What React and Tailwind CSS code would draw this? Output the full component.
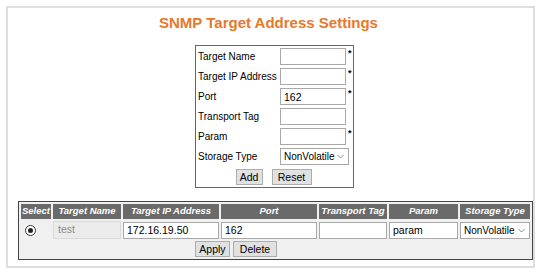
import React from 'react';

const font = "font-['Liberation_Sans',Arial,sans-serif]";

function Chevron() {
  return (
    <svg width="7" height="5" viewBox="0 0 7 5" className="shrink-0">
      <path d="M0.5 1 L3.5 4 L6.5 1" fill="none" stroke="#8a8a8a" strokeWidth="1" />
    </svg>
  );
}

function FakeSelect({ className = '' }) {
  return (
    <div className={`h-[17px] border border-[#a9a9a9] bg-white flex items-center justify-between pl-[3px] pr-[4px] text-[10px] text-black ${className}`}>
      <span>NonVolatile</span>
      <Chevron />
    </div>
  );
}

function Field({ value = '' }) {
  return (
    <input
      readOnly
      defaultValue={value}
      className="h-[17px] w-full border border-[#a9a9a9] bg-white px-[3px] text-[10.5px] text-black outline-none"
    />
  );
}

function Btn({ children, className = '' }) {
  return (
    <button className={`h-[16px] border border-[#adadad] bg-[#e1e1e1] text-[10.5px] leading-none text-black ${className}`}>
      {children}
    </button>
  );
}

const formRows = [
  { label: 'Target Name', value: '', req: true },
  { label: 'Target IP Address', value: '', req: true },
  { label: 'Port', value: '162', req: true },
  { label: 'Transport Tag', value: '', req: false },
  { label: 'Param', value: '', req: true },
];

const headers = ['Select', 'Target Name', 'Target IP Address', 'Port', 'Transport Tag', 'Param', 'Storage Type'];

export default function App() {
  return (
    <div className={`w-[541px] h-[274px] bg-white p-[6px] ${font}`}>
      <div className="h-[262px] border-2 border-[#dedede] flex flex-col">
        <h1 className="pt-[6px] pr-[4px] text-center text-[15px] leading-[18px] font-bold text-[#e8782a]">
          SNMP Target Address Settings
        </h1>

        {/* add form */}
        <div className="mt-[13px] ml-[187px] w-[159px] border border-[#666] pt-[2px] pb-[2px] pl-[2px]">
          <div className="grid grid-cols-[82px_66px_1fr] items-center gap-y-[3px] text-[10px] text-black">
            {formRows.map((r) => (
              <React.Fragment key={r.label}>
                <span className="whitespace-nowrap leading-[17px]">{r.label}</span>
                <Field value={r.value} />
                <span className="self-start pl-[2px] text-[9px] font-bold leading-[10px]">{r.req ? '*' : ''}</span>
              </React.Fragment>
            ))}
            <span className="whitespace-nowrap leading-[17px]">Storage Type</span>
            <FakeSelect className="col-span-2 w-[69px]" />
          </div>
          <div className="mt-[4px] flex justify-center gap-[9px] pr-[4px]">
            <Btn className="w-[27px]">Add</Btn>
            <Btn className="w-[40px]">Reset</Btn>
          </div>
        </div>

        {/* entries table */}
        <div className="mt-[13px] ml-[10px] w-[515px] border border-[#444] bg-[#f0f0f0] p-[2px]">
          <div className="grid grid-cols-[30px_68px_96px_96px_68px_69px_70px] gap-[2px]">
            {headers.map((h) => (
              <div
                key={h}
                className="h-[15px] bg-[#6a6a6a] text-white font-bold italic text-[9.5px] flex items-center justify-center whitespace-nowrap"
              >
                {h}
              </div>
            ))}

            <div className="h-[18px] flex items-center pl-[4px]">
              <div className="w-[11px] h-[11px] rounded-full border border-[#333] bg-white flex items-center justify-center">
                <div className="w-[5px] h-[5px] rounded-full bg-[#222]" />
              </div>
            </div>
            <div className="h-[18px] border border-[#dadada] bg-[#ebebeb] flex items-center px-[4px] text-[10.5px] text-[#8a8a8a]">
              test
            </div>
            <div className="h-[18px] flex items-center"><Field value="172.16.19.50" /></div>
            <div className="h-[18px] flex items-center"><Field value="162" /></div>
            <div className="h-[18px] flex items-center"><Field /></div>
            <div className="h-[18px] flex items-center"><Field value="param" /></div>
            <div className="h-[18px] flex items-center"><FakeSelect className="w-full" /></div>

            <div className="col-span-7 flex gap-[3px] pl-[174px]">
              <Btn className="w-[35px]">Apply</Btn>
              <Btn className="w-[44px]">Delete</Btn>
            </div>
          </div>
        </div>
      </div>
    </div>
  );
}
